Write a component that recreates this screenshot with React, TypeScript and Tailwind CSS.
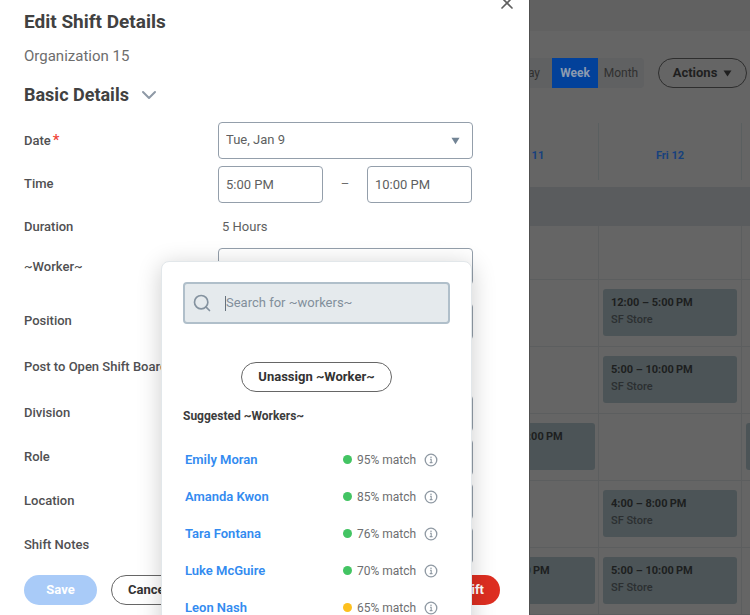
import type { ReactNode } from "react";
import { ChevronDown, Search, X } from "lucide-react";

const labelClass = "w-[194px] shrink-0 text-[13px] font-medium leading-4 text-[#505052]";
const boxClass = "h-[37px] rounded-[4px] border border-[#949fab] bg-white px-[7px] text-[13px] leading-4 text-[#5e5f61] outline-none";
const outlineButton = "rounded-full border border-[#666] bg-white text-[13px] font-bold text-[#333]";

const workers = [
  { name: "Emily Moran", match: "95% match", strong: true },
  { name: "Amanda Kwon", match: "85% match", strong: true },
  { name: "Tara Fontana", match: "76% match", strong: true },
  { name: "Luke McGuire", match: "70% match", strong: true },
  { name: "Leon Nash", match: "65% match", strong: false },
];

// Times use a thin space before AM/PM.
const shiftRows = [
  { thu: "", fri: "12:00 – 5:00\u2009PM", sat: false },
  { thu: "", fri: "5:00 – 10:00\u2009PM", sat: false },
  { thu: "9:00\u2009AM – 5:00\u2009PM", fri: "", sat: true },
  { thu: "", fri: "4:00 – 8:00\u2009PM", sat: false },
  { thu: "5:00 – 10:00\u2009PM", fri: "5:00 – 10:00\u2009PM", sat: false },
];

function Triangle({ className }: { className: string }) {
  return (
    <svg viewBox="0 0 10 8" className={className} aria-hidden="true">
      <path d="M0.5 0.5h9L5 7.5z" fill="currentColor" />
    </svg>
  );
}

function InfoIcon() {
  return (
    <svg viewBox="0 0 14 14" className="size-[14px]" fill="none" stroke="#8f99a3" aria-hidden="true">
      <circle cx="7" cy="7" r="5.8" strokeWidth="1.3" />
      <path d="M6 6.3h1.2v3.2M5.7 9.6h2.8" strokeWidth="1.1" />
      <circle cx="7" cy="4.2" r="0.8" fill="#8f99a3" stroke="none" />
    </svg>
  );
}

function Field({ id, label, height, children }: { id: string; label: string; height: string; children: ReactNode }) {
  return (
    <div className={`flex items-center ${height}`}>
      <label htmlFor={id} className={labelClass}>{label}</label>
      <div className="flex flex-1 items-center">{children}</div>
    </div>
  );
}

function WorkerMenu() {
  return (
    <div className="absolute -left-[57px] top-[13px] z-10 w-[311px] rounded-[8px] border border-[#e2e7ea] bg-white px-[21px] pb-6 pt-5 shadow-[0_4px_24px_rgba(0,0,0,0.2)]">
      <div className="flex h-[42px] items-center rounded-[4px] border-2 border-[#b0bfca] bg-[#e5eaed] pl-[7px]">
        <Search className="size-5 text-[#84929f]" strokeWidth={2} />
        <span className="ml-[13px] h-[15px] w-px bg-[#66717c]" />
        <input
          type="text"
          aria-label="Search for workers"
          placeholder="Search for ~workers~"
          className="min-w-0 flex-1 bg-transparent text-[13px] leading-4 outline-none placeholder:text-[#828f9b]"
        />
      </div>
      <div className="mt-[38px] flex justify-center">
        <button type="button" className={`h-[30px] w-[151px] ${outlineButton}`}>Unassign ~Worker~</button>
      </div>
      <h3 className="mt-4 text-[12px] font-bold leading-4 text-[#3c3c3c]">Suggested ~Workers~</h3>
      <ul className="mt-[17px] pl-[2px] pr-3">
        {workers.map((w) => (
          <li key={w.name} className="flex h-[37px] items-center">
            <a href="#" className="flex-1 text-[13px] font-semibold leading-4 text-[#338bf0]">{w.name}</a>
            <span className={`size-[9px] rounded-full ${w.strong ? "bg-[#43c463]" : "bg-[#fdc01e]"}`} />
            <span className="ml-[5px] w-[67px] text-[12px] leading-4 text-[#6d6e70]">{w.match}</span>
            <button type="button" aria-label={`About ${w.name}`}><InfoIcon /></button>
          </li>
        ))}
      </ul>
    </div>
  );
}

function Drawer() {
  return (
    <form className="relative w-[529px] shrink-0 overflow-hidden bg-white pl-6 pr-[29px] pt-[10px]">
      <button type="button" aria-label="Close" className="absolute -top-[7px] right-[12px] text-[#606060]">
        <X className="size-5" strokeWidth={2} />
      </button>
      <h1 className="text-[19px] font-bold leading-6 text-[#414141]">Edit Shift Details</h1>
      <p className="mt-3 text-[15px] leading-5 text-[#6d6d6d]">Organization 15</p>
      <h2 className="mt-[17px] flex items-center gap-2 text-[18px] font-bold leading-6 text-[#414141]">
        Basic Details
        <ChevronDown className="size-6 text-[#8e99a6]" strokeWidth={2} />
      </h2>

      <div className="mt-[11px] w-[449px]">
        <div className="flex h-11 items-center">
          <label htmlFor="date" className={labelClass}>
            Date<span className="ml-[2px] text-[15px] text-[#f04438]">*</span>
          </label>
          <div className="relative flex-1">
            <select id="date" className={`w-full appearance-none ${boxClass}`}>
              <option>Tue, Jan 9</option>
            </select>
            <Triangle className="pointer-events-none absolute right-[13px] top-[15px] h-[8px] w-[9px] text-[#728495]" />
          </div>
        </div>
        <Field id="start" label="Time" height="h-11">
          <input id="start" defaultValue="5:00 PM" className={`w-[105px] ${boxClass}`} />
          <span className="w-11 text-center text-[13px] text-[#6d6d6d]">–</span>
          <input aria-label="End time" defaultValue="10:00 PM" className={`w-[105px] ${boxClass}`} />
        </Field>
        <Field id="duration" label="Duration" height="h-[42px]">
          <output id="duration" className="pl-1 text-[13px] leading-4 text-[#5e5f61]">5 Hours</output>
        </Field>
        <Field id="worker" label="~Worker~" height="h-[37px]">
          <div className="relative flex-1">
            <input id="worker" className={`block w-full ${boxClass}`} />
            <WorkerMenu />
          </div>
        </Field>
        <div className="pt-[14px]">
          <Field id="position" label="Position" height="h-11"><input id="position" className={`w-full ${boxClass}`} /></Field>
          <Field id="board" label="Post to Open Shift Board" height="h-12"><input id="board" type="checkbox" /></Field>
          <Field id="division" label="Division" height="h-11"><input id="division" className={`w-full ${boxClass}`} /></Field>
          <Field id="role" label="Role" height="h-11"><input id="role" className={`w-full ${boxClass}`} /></Field>
          <Field id="location" label="Location" height="h-11"><input id="location" className={`w-full ${boxClass}`} /></Field>
          <Field id="notes" label="Shift Notes" height="h-11"><input id="notes" className={`w-full ${boxClass}`} /></Field>
        </div>
      </div>

      <div className="mt-2 flex items-center">
        <button type="button" className="h-[30px] w-[73px] rounded-full bg-[#a9cbf8] text-[13px] font-bold text-white">Save</button>
        <button type="button" className={`ml-[14px] h-[30px] w-[74px] ${outlineButton}`}>Cancel</button>
        <button type="button" className="ml-auto h-[30px] rounded-full bg-[#de2e21] px-4 text-[13px] font-bold text-white">Delete Shift</button>
      </div>
    </form>
  );
}

function ShiftCard({ time }: { time: string }) {
  return (
    <div className="h-[47px] rounded-[3px] bg-[#4c5457] px-2 pt-[6px]">
      <p className="whitespace-nowrap text-[11px] font-bold leading-4 text-[#1d1f20]">{time}</p>
      <p className="whitespace-nowrap text-[11px] font-medium leading-[17px] text-[#2b2f31]">SF Store</p>
    </div>
  );
}

function Schedule() {
  return (
    <main className="min-w-0 flex-1 overflow-hidden border-l border-[#505050] bg-[#656565]">
      <div className="h-[31px] bg-[#616161]" />
      <div className="-ml-5 flex items-center pt-[27px]">
        <div className="flex h-[30px] shrink-0 overflow-hidden rounded-[4px] bg-[#606162] text-[12px] text-[#303030]">
          <button type="button" className="w-[42px] pr-3 text-right">Day</button>
          <button type="button" className="w-[46px] bg-[#02419a] font-bold text-[#8b9bb0]">Week</button>
          <button type="button" className="w-[46px]">Month</button>
        </div>
        <button type="button" className="ml-[14px] flex h-[30px] w-[89px] shrink-0 items-center justify-center gap-[6px] rounded-full border border-[#2e2e2e] text-[13px] font-bold text-[#1f1f1f]">
          Actions <Triangle className="h-[7px] w-[9px]" />
        </button>
      </div>

      <div className="-ml-[74px] mt-[35px] flex h-[57px]">
        {["Thu 11", "Fri 12", "Sat 13"].map((day) => (
          <div key={day} className="flex w-[143px] shrink-0 justify-center border-r border-[#5a5f60] pt-[25px]">
            <a href="#" className="text-[11px] font-bold leading-4 text-[#17417d]">{day}</a>
          </div>
        ))}
      </div>
      <div className="mt-[7px] h-[39px] bg-[#5a5c5e]" />
      <div className="-ml-[74px] flex h-[54px] border-b border-[#5c5e5f]">
        <div className="w-[143px] shrink-0 border-r border-[#5c5e5f]" />
        <div className="w-[143px] shrink-0 border-r border-[#5c5e5f]" />
      </div>
      {shiftRows.map((row, i) => (
        <div key={i} className="-ml-[74px] flex h-[67px] border-b border-[#5c5e5f]">
          <div className="w-[143px] shrink-0 border-r border-[#5c5e5f] py-[9px] pl-1 pr-[3px]">
            {row.thu && <ShiftCard time={row.thu} />}
          </div>
          <div className="w-[143px] shrink-0 border-r border-[#5c5e5f] py-[9px] pl-1 pr-1">
            {row.fri && <ShiftCard time={row.fri} />}
          </div>
          <div className="w-[143px] shrink-0 py-[9px] pl-1 pr-[3px]">
            {row.sat && <div className="h-[47px] rounded-[3px] bg-[#4c5457]" />}
          </div>
        </div>
      ))}
    </main>
  );
}

export default function App() {
  return (
    <div className="flex h-screen overflow-hidden font-['Roboto','Liberation_Sans',sans-serif]">
      <Drawer />
      <Schedule />
    </div>
  );
}
